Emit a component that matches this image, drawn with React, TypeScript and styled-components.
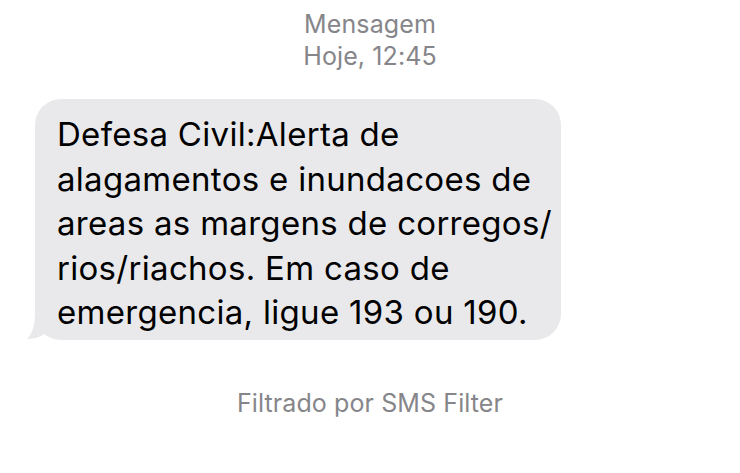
import React from "react";
import styled, { createGlobalStyle } from "styled-components";

const Global = createGlobalStyle`
  html, body { margin: 0; padding: 0; background: #ffffff; }
  body { font-family: Inter, "Noto Sans", sans-serif; -webkit-font-smoothing: antialiased; }
`;

const Screen = styled.div`
  width: 740px;
  height: 473px;
  background: #ffffff;
  display: flex;
  flex-direction: column;
  overflow: hidden;
`;

const Header = styled.div`
  display: flex;
  flex-direction: column;
  align-items: center;
  padding-top: 8px;
  color: #86868a;
  font-size: 25px;
  line-height: 32px;
  letter-spacing: 0.1px;
`;

const Row = styled.div`
  display: flex;
  padding: 27px 0 0 35px;
`;

const Bubble = styled.div`
  position: relative;
  width: 526px;
  height: 241px;
  box-sizing: border-box;
  background: #e9e9eb;
  border-radius: 26px;
  padding: 13px 0 0 22px;
  color: #000000;
  font-size: 33px;
  line-height: 44.5px;
  letter-spacing: 0.3px;
`;

const Tail = styled.svg`
  position: absolute;
  left: -8px;
  bottom: 0;
  z-index: 0;
`;

const Line = styled.div`
  position: relative;
  z-index: 1;
  white-space: nowrap;
`;

const Footer = styled.div`
  text-align: center;
  padding-top: 48px;
  color: #86868a;
  font-size: 25px;
  line-height: 30px;
  letter-spacing: 0.1px;
`;

const lines = [
  "Defesa Civil:Alerta de",
  "alagamentos e inundacoes de",
  "areas as margens de corregos/",
  "rios/riachos. Em caso de",
  "emergencia, ligue 193 ou 190.",
];

export default function App() {
  return (
    <Screen>
      <Global />
      <Header>
        <div>Mensagem</div>
        <div>Hoje, 12:45</div>
      </Header>
      <Row>
        <Bubble>
          <Tail width="34" height="34" viewBox="0 0 34 34">
            <path d="M8 6 C8 18 6 27 0 33 C8 33 15 30 19 27 C22 29 26 30 34 30 L34 6 Z" fill="#e9e9eb" />
          </Tail>
          {lines.map((l) => (
            <Line key={l}>{l}</Line>
          ))}
        </Bubble>
      </Row>
      <Footer>Filtrado por SMS Filter</Footer>
    </Screen>
  );
}
